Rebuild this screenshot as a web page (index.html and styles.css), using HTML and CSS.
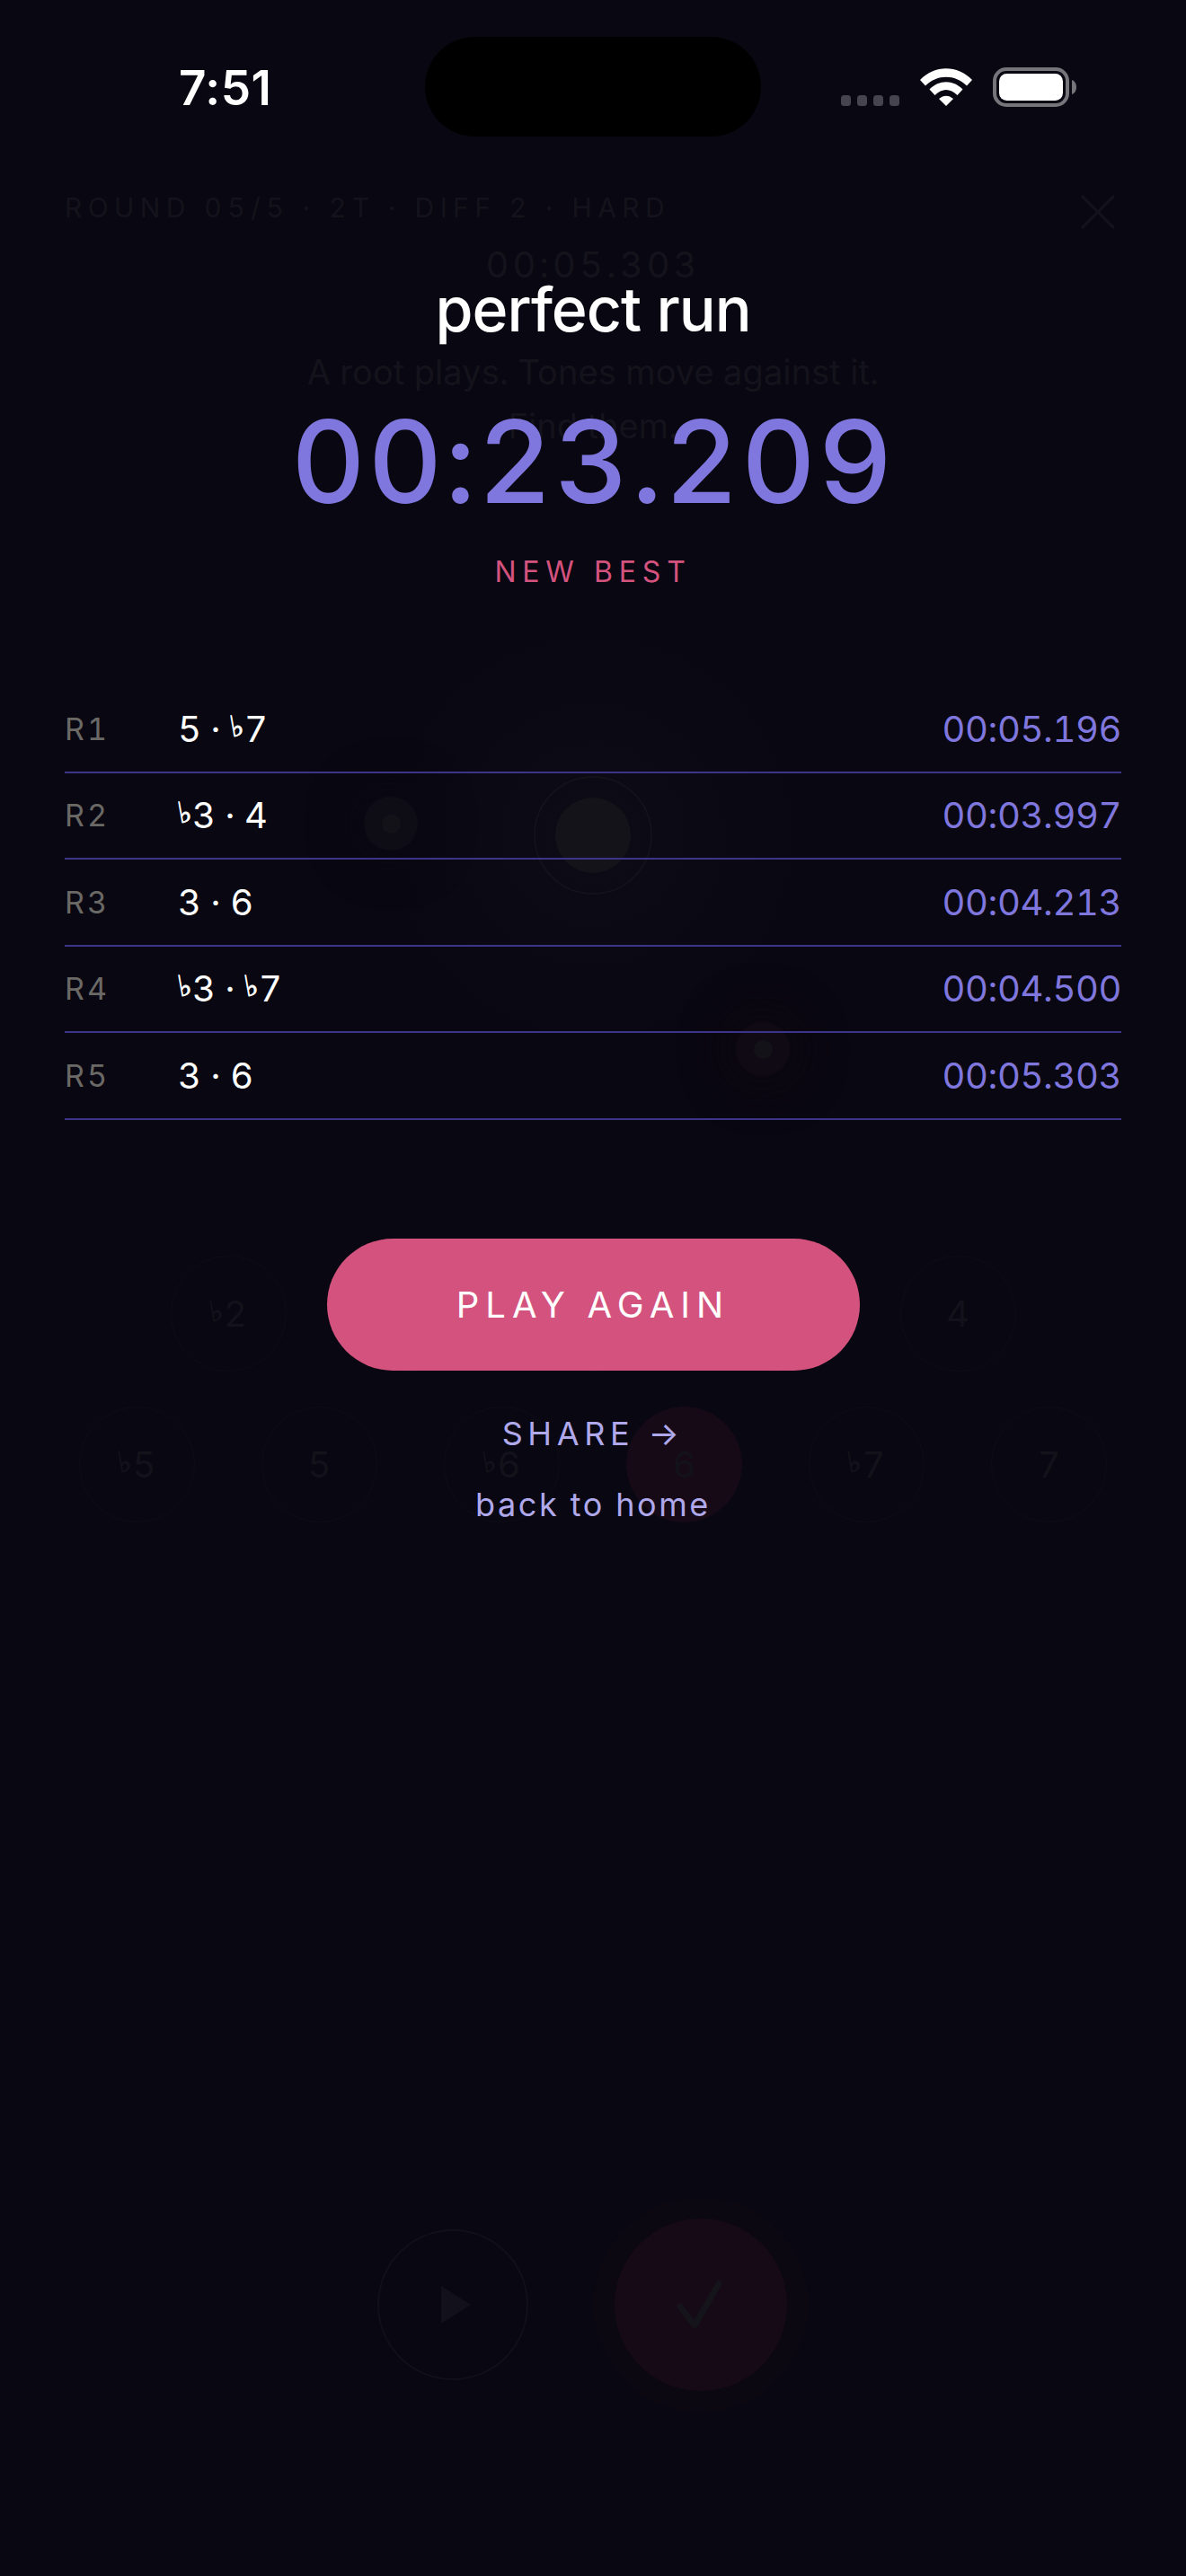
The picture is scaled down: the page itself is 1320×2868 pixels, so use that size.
FILE: index.html
```html
<!DOCTYPE html>
<html lang="en">
<head>
  <meta charset="utf-8">
  <title>perfect run</title>
  <link rel="stylesheet" href="styles.css">
</head>
<body>

<!-- round screen, dimmed behind the results -->
<div class="ghost">
  <div class="ghost-top">
    <span class="ghost-round">ROUND 05/5 · 2T · DIFF 2 · HARD</span>
    <svg class="ghost-close" width="40" height="40" viewBox="0 0 40 40"><path d="M2 2 L38 38 M38 2 L2 38"/></svg>
  </div>
  <div class="ghost-timer">00:05.303</div>
  <p class="ghost-hint">A root plays. Tones move against it.<br>Find them.</p>
  <div class="orbit">
    <span class="node node-root"><i class="node-ring"></i><i class="node-core"></i></span>
    <span class="node node-tone"><i class="node-dot"></i></span>
    <span class="node node-tone node-pink"><i class="node-dot"></i></span>
  </div>
  <div class="notes">
    <div class="notes-row">
      <span class="note"><span><span class="flat">♭</span>2</span></span>
      <span class="note">2</span>
      <span class="note"><span><span class="flat">♭</span>3</span></span>
      <span class="note note-on">3</span>
      <span class="note">4</span>
    </div>
    <div class="notes-row">
      <span class="note"><span><span class="flat">♭</span>5</span></span>
      <span class="note">5</span>
      <span class="note"><span><span class="flat">♭</span>6</span></span>
      <span class="note note-on">6</span>
      <span class="note"><span><span class="flat">♭</span>7</span></span>
      <span class="note">7</span>
    </div>
  </div>
  <div class="controls">
    <span class="replay">
      <svg width="34" height="42" viewBox="0 0 34 42"><path d="M0 0 L33 21 L0 42 Z"/></svg>
    </span>
    <span class="submit-halo">
      <span class="submit">
        <svg width="60" height="60" viewBox="0 0 60 60"><path d="M7 32 L23 53 L50 7"/></svg>
      </span>
    </span>
  </div>
</div>

<main class="results">
  <div class="status">
    <span class="clock">7:51</span>
    <span class="island"></span>
    <div class="status-icons">
      <svg width="65" height="44" viewBox="0 0 65 44">
        <rect x="0" y="31" width="11" height="12" rx="3.5"/>
        <rect x="18" y="31" width="11" height="12" rx="3.5"/>
        <rect x="36" y="31" width="11" height="12" rx="3.5"/>
        <rect x="54" y="31" width="11" height="12" rx="3.5"/>
      </svg>
      <svg width="58" height="44" viewBox="0 0 58 44">
        <path class="wifi" d="M0 14 C16 -3 42 -3 58 14 L52 20.500 C39 7.500 19 7.500 6 20.500 Z"/>
        <path class="wifi" d="M10.500 24.500 C21 13.500 37 13.500 47.500 24.500 L41.500 31 C33.500 23 24.500 23 16.500 31 Z"/>
        <path class="wifi" d="M21 35 C26 30.500 32 30.500 37 35 L29 43 Z"/>
      </svg>
      <svg width="93" height="44" viewBox="0 0 93 44">
        <rect class="batt-case" x="2" y="2" width="81" height="40" rx="13"/>
        <rect class="batt-fill" x="7" y="7" width="71" height="30" rx="8.500"/>
        <path class="batt-nub" d="M88 14 C91 15 93 18 93 22 C93 26 91 29 88 30 Z"/>
      </svg>
    </div>
  </div>

  <h1 class="title">perfect run</h1>
  <div class="total">00:23.209</div>
  <div class="best">NEW BEST</div>

  <div class="rounds">
    <div class="round"><span class="round-no">R1</span><span class="round-notes">5 · <span class="flat">♭</span>7</span><span class="round-time">00:05.196</span></div>
    <div class="round"><span class="round-no">R2</span><span class="round-notes"><span class="flat">♭</span>3 · 4</span><span class="round-time">00:03.997</span></div>
    <div class="round"><span class="round-no">R3</span><span class="round-notes">3 · 6</span><span class="round-time">00:04.213</span></div>
    <div class="round"><span class="round-no">R4</span><span class="round-notes"><span class="flat">♭</span>3 · <span class="flat">♭</span>7</span><span class="round-time">00:04.500</span></div>
    <div class="round"><span class="round-no">R5</span><span class="round-notes">3 · 6</span><span class="round-time">00:05.303</span></div>
  </div>

  <a class="again">PLAY AGAIN</a>
  <a class="share">SHARE →</a>
  <a class="home">back to home</a>
</main>

</body>
</html>
```

FILE: styles.css
```css
html, body {
    margin: 0;
    width: 1320px;
    height: 2868px;
    overflow: hidden;
}

body {
    position: relative;
    background: #090711;
    color: #fff;
    font-family: Inter, "DejaVu Sans", sans-serif;
    font-variant-numeric: tabular-nums;
}

.flat {
    display: inline-block;
    margin-right: 1px;
    font-family: "DejaVu Sans", sans-serif;
    font-size: 0.8em;
    line-height: 0;
    vertical-align: 0.19em;
    -webkit-text-stroke: 0.8px currentColor;
    transform: skewX(10deg);
}

/* dimmed screen underneath */

.ghost {
    position: absolute;
    top: 0;
    left: 0;
    width: 1320px;
    height: 2868px;
    padding-top: 205px;
    box-sizing: border-box;
    color: #14131c;
}

.ghost-top {
    display: flex;
    justify-content: space-between;
    align-items: center;
    height: 52px;
    padding: 0 78px 0 72px;
}

.ghost-round {
    font-size: 30px;
    letter-spacing: 6.400px;
    white-space: nowrap;
}

.ghost-close {
    margin-top: 10px;
}

.ghost-close path {
    fill: none;
    stroke: #14131c;
    stroke-width: 3;
}

.ghost-timer {
    margin-top: 14px;
    font-size: 40px;
    line-height: 48px;
    letter-spacing: 4px;
    text-align: center;
}

.ghost-hint {
    margin: 65px 0 0;
    font-size: 38px;
    line-height: 60px;
    letter-spacing: 0.1px;
    text-align: center;
}

.orbit {
    position: relative;
    height: 700px;
    margin-top: 76px;
    background: radial-gradient(circle at 660px 350px, #0d0b15 0, #0b0913 130px, rgba(12, 10, 20, 0) 230px);
}

.node {
    position: absolute;
    border-radius: 50%;
    display: flex;
    justify-content: center;
    align-items: center;
}

.node-root {
    left: 594px;
    top: 284px;
    width: 132px;
    height: 132px;
}

.node-ring {
    position: absolute;
    top: 0;
    left: 0;
    width: 128px;
    height: 128px;
    border: 2px solid #13121a;
    border-radius: 50%;
}

.node-core {
    width: 84px;
    height: 84px;
    border-radius: 50%;
    background: #15131a;
}

.node-tone {
    left: 405px;
    top: 307px;
    width: 60px;
    height: 60px;
    background: #0e0c15;
    box-shadow: 0 0 40px 20px #0a0812;
}

.node-pink {
    left: 819px;
    top: 558px;
    background: #100a14;
    box-shadow: 0 0 40px 20px #0c0811;
}

.node-dot {
    width: 21px;
    height: 21px;
    border-radius: 50%;
    background: #141219;
}

.notes {
    display: flex;
    flex-direction: column;
    align-items: center;
    gap: 39px;
    margin-top: 118px;
}

.notes-row {
    display: flex;
    gap: 74px;
}

.note {
    display: flex;
    justify-content: center;
    align-items: center;
    width: 127px;
    height: 127px;
    border: 1.500px solid #0e0c16;
    border-radius: 50%;
    font-size: 40px;
    color: #13121a;
}

.note-on {
    background: #160a17;
    border-color: #160a17;
}

.controls {
    display: flex;
    justify-content: center;
    align-items: center;
    gap: 72px;
    margin-top: 751px;
}

.replay {
    display: flex;
    justify-content: center;
    align-items: center;
    width: 164px;
    height: 164px;
    border: 2px solid #110f19;
    border-radius: 50%;
}

.replay svg {
    margin-left: 8px;
}

.replay path {
    fill: #12101a;
}

.submit-halo {
    display: flex;
    justify-content: center;
    align-items: center;
    width: 240px;
    height: 240px;
    border-radius: 50%;
    background: #0b0812;
}

.submit {
    display: flex;
    justify-content: center;
    align-items: center;
    width: 192px;
    height: 192px;
    border-radius: 50%;
    background: #160a17;
}

.submit path {
    fill: none;
    stroke: #15141b;
    stroke-width: 7;
    stroke-linecap: round;
    stroke-linejoin: round;
}

/* results on top */

.results {
    position: relative;
    display: flex;
    flex-direction: column;
    align-items: center;
}

.status {
    display: grid;
    grid-template-columns: 1fr 374px 1fr;
    align-items: center;
    width: 100%;
    height: 111px;
    margin-top: 41px;
}

.clock {
    padding-left: 199px;
    padding-top: 2px;
    font-size: 53px;
    font-weight: 600;
    line-height: 60px;
    font-variant-numeric: normal;
    letter-spacing: 0.5px;
}

.island {
    height: 111px;
    border-radius: 56px;
    background: #000;
}

.status-icons {
    display: flex;
    justify-content: flex-end;
    gap: 23px;
    padding-right: 122px;
}

.status-icons rect {
    fill: #46444f;
}

.status-icons .wifi {
    fill: #fff;
}

.status-icons .batt-case {
    fill: none;
    stroke: #77757c;
    stroke-width: 4;
}

.status-icons .batt-fill {
    fill: #fff;
}

.status-icons .batt-nub {
    fill: #77757c;
}

.title {
    margin: 152px 0 0;
    font-size: 68px;
    font-weight: 500;
    line-height: 80px;
    letter-spacing: -1px;
}

.total {
    margin-top: 60px;
    font-size: 128px;
    font-weight: 500;
    line-height: 140px;
    letter-spacing: 2.500px;
    color: #7f77dd;
}

.best {
    margin-top: 33px;
    font-size: 32px;
    line-height: 40px;
    letter-spacing: 6.800px;
    color: #d4537e;
}

.rounds {
    width: 1176px;
    margin-top: 107px;
}

.round {
    display: flex;
    align-items: center;
    height: 94.500px;
    border-bottom: 2px solid #3c3489;
}

.round-no {
    width: 126px;
    font-size: 34px;
    letter-spacing: 3px;
    color: #6b6966;
}

.round-notes {
    flex: 1;
    font-size: 40px;
    letter-spacing: -0.2px;
}

.round-time {
    font-size: 40px;
    letter-spacing: -0.4px;
    color: #7f77dd;
}

.again {
    display: flex;
    justify-content: center;
    align-items: center;
    width: 593px;
    height: 147px;
    margin-top: 132px;
    border-radius: 74px;
    background: #d4537e;
    font-size: 40px;
    letter-spacing: 7px;
}

.share {
    margin-top: 46px;
    font-size: 36px;
    line-height: 48px;
    letter-spacing: 5.600px;
    color: #afa9ec;
}

.home {
    margin-top: 31px;
    font-size: 36px;
    line-height: 48px;
    letter-spacing: 2.600px;
    color: #afa9ec;
}
```
